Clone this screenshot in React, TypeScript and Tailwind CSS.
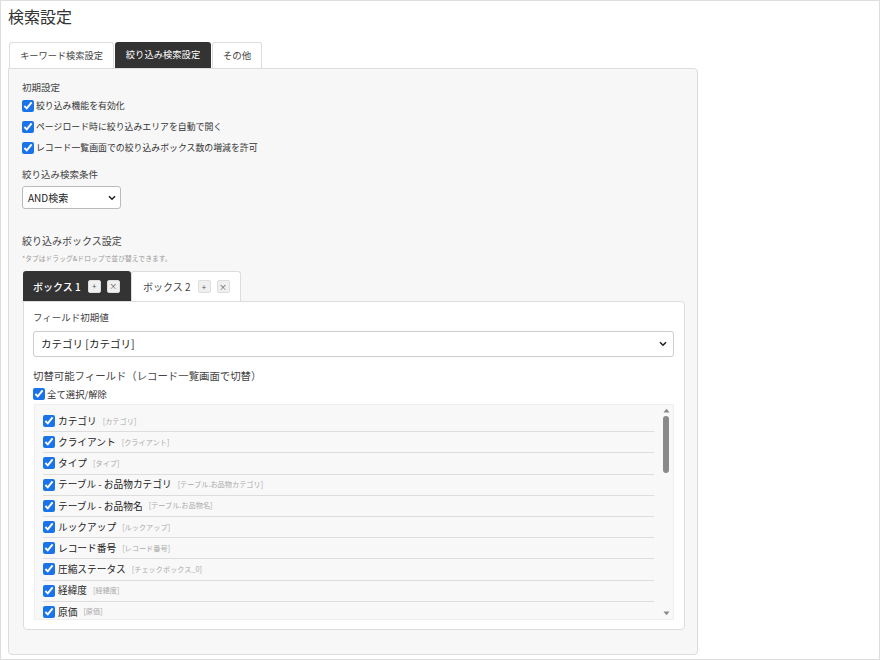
import type { ReactNode } from "react";

const font = { fontFamily: '"Noto Sans CJK JP", "Noto Sans", sans-serif' };

const fields: [string, string][] = [
  ["カテゴリ", "[カテゴリ]"],
  ["クライアント", "[クライアント]"],
  ["タイプ", "[タイプ]"],
  ["テーブル - お品物カテゴリ", "[テーブル.お品物カテゴリ]"],
  ["テーブル - お品物名", "[テーブル.お品物名]"],
  ["ルックアップ", "[ルックアップ]"],
  ["レコード番号", "[レコード番号]"],
  ["圧縮ステータス", "[チェックボックス_0]"],
  ["経緯度", "[経緯度]"],
  ["原価", "[原価]"],
];

function Check() {
  return (
    <input
      type="checkbox"
      defaultChecked
      className="m-0 h-[12px] w-[12px] shrink-0 accent-[#1a73e8]"
    />
  );
}

function Chevron() {
  return (
    <svg width="8" height="6" viewBox="0 0 8 6" className="shrink-0">
      <path d="M1 1.2 L4 4.2 L7 1.2" fill="none" stroke="#222" strokeWidth="1.6" />
    </svg>
  );
}

function MiniBtn({ children }: { children: ReactNode }) {
  return (
    <span className="flex h-[13px] w-[13px] items-center justify-center rounded-[2px] border border-[#ddd] bg-[#f0f0f0] text-[8px] leading-none text-[#555]">
      {children}
    </span>
  );
}

function Label({ children }: { children: ReactNode }) {
  return <div className="h-[16px] text-[9.5px] leading-[16px] text-[#444]">{children}</div>;
}

export default function App() {
  return (
    <div style={font} className="h-[660px] w-[880px] overflow-hidden border border-[#ddd] bg-white text-[#333]">
      <div className="pl-[7px] pt-[4px]">
        <h1 className="h-[22px] text-[16px] font-normal leading-[22px] text-[#333]">検索設定</h1>

        {/* top tabs */}
        <div className="mt-[15px] flex h-[26px] items-stretch pl-[1px]">
          <div className="flex w-[105px] items-center justify-center rounded-t-[3px] border border-b-0 border-[#ddd] bg-white text-[9.2px] text-[#444]">
            キーワード検索設定
          </div>
          <div className="ml-[1px] flex w-[96px] items-center justify-center rounded-t-[3px] bg-[#333] text-[9.3px] text-white">
            絞り込み検索設定
          </div>
          <div className="ml-[1px] flex w-[50px] items-center justify-center rounded-t-[3px] border border-b-0 border-[#ddd] bg-white text-[9.5px] text-[#444]">
            その他
          </div>
        </div>

        {/* main panel */}
        <div className="w-[690px] rounded-[4px] rounded-tl-none border border-[#ddd] bg-[#f7f7f7] pb-[24px] pl-[13px] pr-[12px] pt-[10px]">
          <Label>初期設定</Label>
          {[
            "絞り込み機能を有効化",
            "ページロード時に絞り込みエリアを自動で開く",
            "レコード一覧画面での絞り込みボックス数の増減を許可",
          ].map((t) => (
            <div key={t} className="flex h-[21px] items-center gap-[2px] pt-[1px]">
              <Check />
              <span className="text-[8.9px] text-[#333]">{t}</span>
            </div>
          ))}

          <div className="mt-[8px]">
            <Label>絞り込み検索条件</Label>
          </div>
          <div className="mt-[4px] flex h-[23px] w-[99px] items-center justify-between rounded-[3px] border border-[#bbb] bg-white pl-[5px] pr-[4px] text-[10px] text-[#222]">
            <span>AND検索</span>
            <Chevron />
          </div>

          <div className="mt-[24px]">
            <div className="h-[16px] text-[10px] leading-[16px] text-[#444]">絞り込みボックス設定</div>
          </div>
          <div className="mt-[4px] h-[10px] text-[6.8px] leading-[10px] text-[#999]">
            *タブはドラッグ&amp;ドロップで並び替えできます。
          </div>

          {/* box tabs */}
          <div className="mt-[8px] flex h-[30px] items-stretch pl-[1px]">
            <div className="flex w-[108px] items-center gap-[6px] rounded-t-[3px] bg-[#333] pl-[10px]">
              <span className="mr-[1px] text-[10px] font-medium text-white">ボックス 1</span>
              <MiniBtn>+</MiniBtn>
              <MiniBtn>×</MiniBtn>
            </div>
            <div className="flex w-[110px] items-center gap-[6px] rounded-t-[3px] border border-b-0 border-[#ddd] bg-white pl-[11px]">
              <span className="mr-[1px] text-[10px] text-[#444]">ボックス 2</span>
              <MiniBtn>+</MiniBtn>
              <MiniBtn>×</MiniBtn>
            </div>
          </div>

          {/* box panel */}
          <div className="ml-[1px] w-[662px] rounded-[4px] rounded-tl-none border border-[#ddd] bg-white pb-[9px] pl-[9px] pr-[10px] pt-[7px]">
            <Label>フィールド初期値</Label>
            <div className="mt-[6px] flex h-[26px] items-center justify-between rounded-[3px] border border-[#ccc] bg-white pl-[7px] pr-[6px] text-[10.5px] text-[#222]">
              <span>カテゴリ [カテゴリ]</span>
              <Chevron />
            </div>

            <div className="mt-[11px]">
              <div className="h-[16px] text-[10.4px] leading-[16px] text-[#444]">切替可能フィールド（レコード一覧画面で切替）</div>
            </div>
            <div className="flex h-[20px] items-center gap-[2px]">
              <Check />
              <span className="text-[9.4px] text-[#333]">全て選択/解除</span>
            </div>

            {/* field list */}
            <div className="ml-[1px] flex h-[216px] overflow-hidden border border-[#eee] bg-[#f8f8f8]">
              <div className="flex-1 pl-[8px] pr-[5px] pt-[6px]">
                {fields.map(([name, code]) => (
                  <div key={name} className="flex h-[21.2px] items-center gap-[3px] border-b border-[#ddd]">
                    <Check />
                    <span className="text-[9.7px] text-[#222]">{name}</span>
                    <span className="ml-[3px] text-[7.2px] text-[#aaa]">{code}</span>
                  </div>
                ))}
              </div>
              {/* scrollbar */}
              <div className="flex w-[14px] flex-col items-center bg-[#f8f8f8] py-[3px]">
                <svg width="7" height="5" viewBox="0 0 7 5">
                  <path d="M0.5 4.5 L3.5 0.8 L6.5 4.5 Z" fill="#888" />
                </svg>
                <div className="mt-[3px] h-[57px] w-[6px] rounded-full bg-[#8a8a8a]" />
                <div className="flex-1" />
                <svg width="7" height="5" viewBox="0 0 7 5">
                  <path d="M0.5 0.5 L3.5 4.2 L6.5 0.5 Z" fill="#888" />
                </svg>
              </div>
            </div>
          </div>
        </div>
      </div>
    </div>
  );
}
